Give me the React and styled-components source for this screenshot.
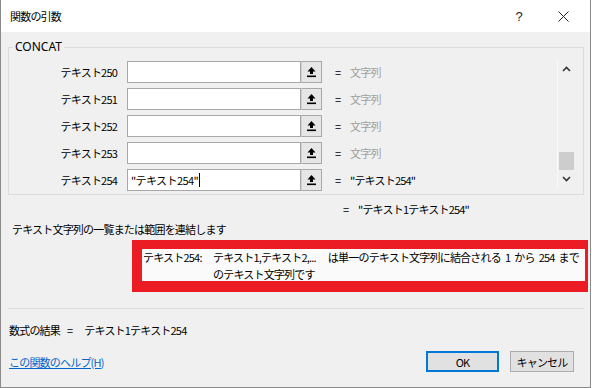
import React from 'react';
import styled, { createGlobalStyle } from 'styled-components';

const GlobalStyle = createGlobalStyle`
    html, body {
        margin: 0;
        padding: 0;
        background: #ffffff;
    }
    body {
        font-family: "Noto Sans CJK JP", "Noto Sans", sans-serif;
        font-size: 11px;
        color: #000;
    }
`

const Window = styled.div`
    width: 591px;
    height: 388px;
    box-sizing: border-box;
    border: 1px solid #8a8a8a;
    border-top: none;
    background: #f0f0f0;
    display: flex;
    flex-direction: column;
    letter-spacing: -0.8px;
`

const TitleBar = styled.div`
    height: 32px;
    background: #fff;
    display: flex;
    align-items: center;
    padding: 0 5px 0 9px;
`

const Title = styled.div`
    flex: 1;
    font-size: 11px;
`

const TitleButton = styled.div`
    width: 44px;
    height: 32px;
    display: flex;
    align-items: center;
    justify-content: center;
    font-family: "Liberation Sans", sans-serif;
    font-size: 13px;
    letter-spacing: 0;
    color: #222;
`

const Body = styled.div`
    flex: 1;
    display: flex;
    flex-direction: column;
    padding: 0 6px 0 7px;
`

const Group = styled.fieldset`
    margin: 8px 0 0 0;
    padding: 7px 8px 3px 0;
    border: 1px solid #dcdcdc;
    display: flex;
    min-width: 0;
`

const Legend = styled.legend`
    margin-left: 4px;
    padding: 0 2px;
    line-height: 14px;
    letter-spacing: 0;
    font-size: 12px;
    font-family: "Noto Sans", sans-serif;
`

const Rows = styled.div`
    display: flex;
    flex-direction: column;
    gap: 5px;
    flex: 1;
`

const Row = styled.div`
    display: flex;
    align-items: center;
    height: 22px;
`

const Label = styled.div`
    width: 108px;
    text-align: right;
    margin-right: 10px;
`

const Input = styled.div`
    width: 174px;
    height: 22px;
    box-sizing: border-box;
    border: 1px solid #a8a8a8;
    background: #fff;
    display: flex;
    align-items: center;
    padding-left: 3px;
    letter-spacing: -0.6px;
`

const Caret = styled.span`
    display: inline-block;
    width: 1px;
    height: 14px;
    background: #000;
    margin-left: 1px;
`

const RefButton = styled.div`
    width: 21px;
    height: 22px;
    box-sizing: border-box;
    border: 1px solid #a8a8a8;
    border-left-color: #d0d0d0;
    background: #e6e6e6;
    display: flex;
    align-items: center;
    justify-content: center;
`

const Equals = styled.div`
    width: 15px;
    margin-left: 13px;
    letter-spacing: 0;
`

const Value = styled.div`
    color: ${p => (p.$muted ? '#a0a0a0' : '#000')};
`

const ScrollBar = styled.div`
    width: 17px;
    display: flex;
    flex-direction: column;
    align-items: center;
    border-left: 1px solid #fafafa;
    margin: -1px 0 3px 0;
`

const Arrow = styled.div`
    height: 18px;
    display: flex;
    align-items: center;
    justify-content: center;
`

const Track = styled.div`
    flex: 1;
    width: 100%;
    display: flex;
    flex-direction: column;
    justify-content: flex-end;
    align-items: center;
`

const Thumb = styled.div`
    width: 15px;
    height: 18px;
    background: #cdcdcd;
`

const ResultLine = styled.div`
    display: flex;
    margin-top: 7px;
    padding-left: 322px;
    height: 14px;
    line-height: 14px;
`

const Description = styled.div`
    margin-top: 6px;
    padding-left: 4px;
    line-height: 14px;
`

const Highlight = styled.div`
    margin: 4px 0 0 124px;
    width: 456px;
    box-sizing: border-box;
    border: solid #ec1c24;
    border-width: 9px 3px 11px 10px;
`

const HelpBox = styled.div`
    background: #fafafa;
    height: 32px;
    display: flex;
    line-height: 17px;
    padding-left: 1px;
    white-space: nowrap;
`

const HelpName = styled.div`
    width: 70px;
    flex-shrink: 0;
`

const HelpText = styled.div`
    flex: 1;
`

const Gap = styled.span`
    display: inline-block;
    width: ${p => p.$w}px;
`

const Separator = styled.div`
    margin-top: 16px;
    height: 1px;
    background: #dcdcdc;
`

const Formula = styled.div`
    margin-top: 14px;
    line-height: 14px;
    padding-left: 1px;
    display: flex;
`

const Footer = styled.div`
    display: flex;
    align-items: center;
    margin-top: 14px;
    padding-right: 10px;
`

const HelpLink = styled.a`
    flex: 1;
    color: #0066cc;
    text-decoration: underline;
    padding-left: 1px;
    cursor: pointer;
`

const Button = styled.div`
    width: ${p => p.$width}px;
    height: 21px;
    box-sizing: border-box;
    border: ${p => (p.$primary ? '2px solid #0078d7' : '1px solid #adadad')};
    background: #e1e1e1;
    display: flex;
    align-items: center;
    justify-content: center;
    margin-left: ${p => p.$gap}px;
`

const RefIcon = () => (
    <svg width="11" height="12" viewBox="0 0 11 12">
        <path d="M5.5 1 L1.5 5.5 H4 V8 H7 V5.5 H9.5 Z" fill="#000" />
        <rect x="1" y="9.5" width="9" height="1.6" fill="#000" />
    </svg>
)

const CloseIcon = () => (
    <svg width="11" height="11" viewBox="0 0 11 11">
        <path d="M0.5 0.5 L10.5 10.5 M10.5 0.5 L0.5 10.5" stroke="#222" strokeWidth="1" />
    </svg>
)

const Chevron = ({ up }) => (
    <svg width="9" height="6" viewBox="0 0 9 6">
        <path
            d={up ? 'M1 5 L4.5 1.5 L8 5' : 'M1 1 L4.5 4.5 L8 1'}
            fill="none"
            stroke="#333"
            strokeWidth="1.6"
        />
    </svg>
)

const rows = [
    { label: 'テキスト250', input: '', value: '文字列' },
    { label: 'テキスト251', input: '', value: '文字列' },
    { label: 'テキスト252', input: '', value: '文字列' },
    { label: 'テキスト253', input: '', value: '文字列' },
    { label: 'テキスト254', input: '"テキスト254"', value: '"テキスト254"', active: true },
]

export default function App() {
    return (
        <>
            <GlobalStyle />
            <Window>
                <TitleBar>
                    <Title>関数の引数</Title>
                    <TitleButton>?</TitleButton>
                    <TitleButton><CloseIcon /></TitleButton>
                </TitleBar>

                <Body>
                    <Group>
                        <Legend>CONCAT</Legend>
                        <Rows>
                            {rows.map(row => (
                                <Row key={row.label}>
                                    <Label>{row.label}</Label>
                                    <Input>
                                        {row.input}
                                        {row.active && <Caret />}
                                    </Input>
                                    <RefButton><RefIcon /></RefButton>
                                    <Equals>=</Equals>
                                    <Value $muted={!row.active}>{row.value}</Value>
                                </Row>
                            ))}
                        </Rows>
                        <ScrollBar>
                            <Arrow><Chevron up /></Arrow>
                            <Track><Thumb /></Track>
                            <Arrow><Chevron /></Arrow>
                        </ScrollBar>
                    </Group>

                    <ResultLine>
                        <Equals as="span">=</Equals>
                        <Value>"テキスト1テキスト254"</Value>
                    </ResultLine>

                    <Description>テキスト文字列の一覧または範囲を連結します</Description>

                    <Highlight>
                        <HelpBox>
                            <HelpName>テキスト254:</HelpName>
                            <HelpText>
                                テキスト1,テキスト2,...<Gap $w={12} />は単一のテキスト文字列に結合される<Gap $w={4} />1<Gap $w={4} />から<Gap $w={4} />254<Gap $w={4} />まで
                                <br />
                                のテキスト文字列です
                            </HelpText>
                        </HelpBox>
                    </Highlight>

                    <Separator />

                    <Formula>
                        数式の結果<Gap $w={7} />=<Gap $w={12} />テキスト1テキスト254
                    </Formula>

                    <Footer>
                        <HelpLink>この関数のヘルプ(H)</HelpLink>
                        <Button $primary $width={73} $gap={0}>OK</Button>
                        <Button $width={64} $gap={11}>キャンセル</Button>
                    </Footer>
                </Body>
            </Window>
        </>
    )
}
